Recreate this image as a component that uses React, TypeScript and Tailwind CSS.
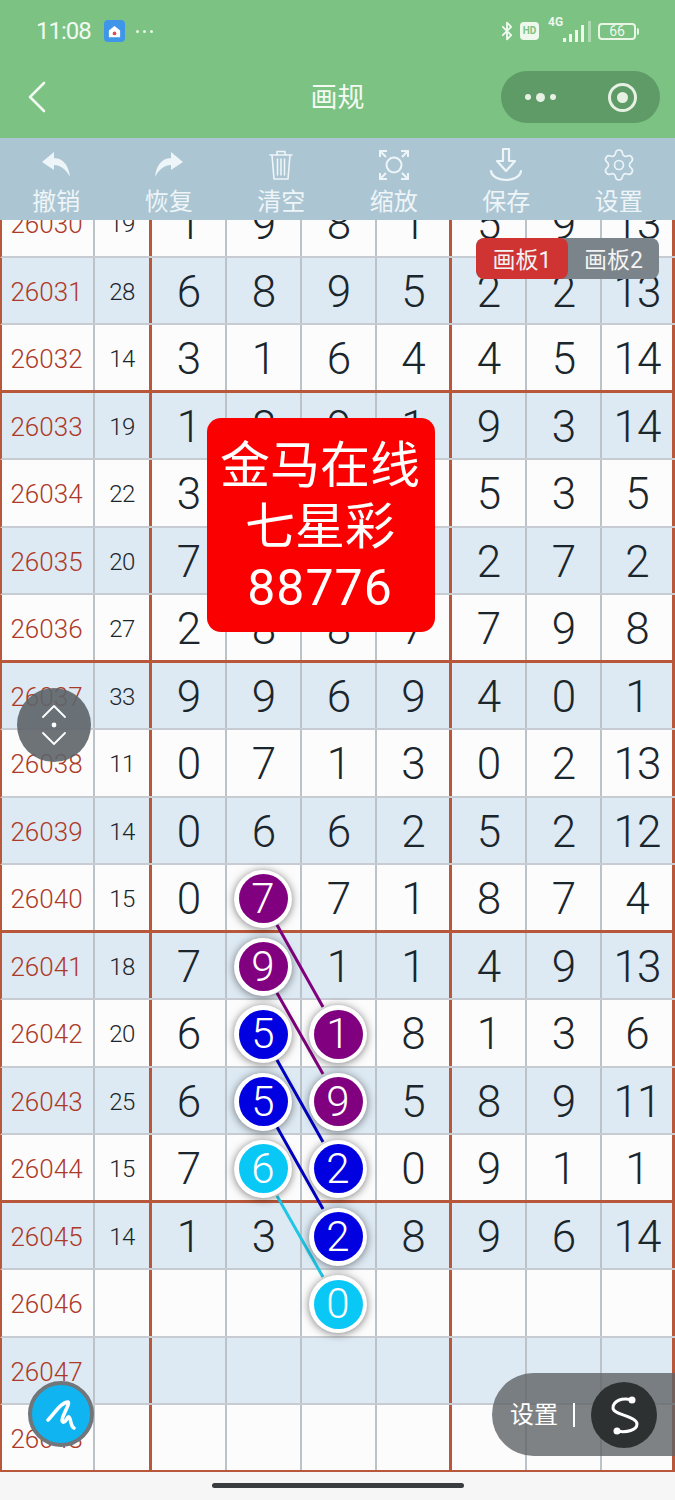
import React from "react";
import { Bluetooth, Settings } from "lucide-react";

type Ball = { v: string; c: string };
const P = "bg-[#800080]";
const B = "bg-[#0000e0]";
const C = "bg-[#0ac8f5]";

type Row = { id: string; sum: string; nums: (string | Ball)[] };
const row = (id: string, sum: string, ...nums: (string | Ball)[]): Row => ({ id, sum, nums });

const rows: Row[] = [
  row("26030", "19", "1", "9", "8", "1", "5", "9", "13"),
  row("26031", "28", "6", "8", "9", "5", "2", "2", "13"),
  row("26032", "14", "3", "1", "6", "4", "4", "5", "14"),
  row("26033", "19", "1", "8", "9", "1", "9", "3", "14"),
  row("26034", "22", "3", "2", "8", "9", "5", "3", "5"),
  row("26035", "20", "7", "4", "1", "8", "2", "7", "2"),
  row("26036", "27", "2", "8", "8", "7", "7", "9", "8"),
  row("26037", "33", "9", "9", "6", "9", "4", "0", "1"),
  row("26038", "11", "0", "7", "1", "3", "0", "2", "13"),
  row("26039", "14", "0", "6", "6", "2", "5", "2", "12"),
  row("26040", "15", "0", { v: "7", c: P }, "7", "1", "8", "7", "4"),
  row("26041", "18", "7", { v: "9", c: P }, "1", "1", "4", "9", "13"),
  row("26042", "20", "6", { v: "5", c: B }, { v: "1", c: P }, "8", "1", "3", "6"),
  row("26043", "25", "6", { v: "5", c: B }, { v: "9", c: P }, "5", "8", "9", "11"),
  row("26044", "15", "7", { v: "6", c: C }, { v: "2", c: B }, "0", "9", "1", "1"),
  row("26045", "14", "1", "3", { v: "2", c: B }, "8", "9", "6", "14"),
  row("26046", "", "", "", { v: "0", c: C }, "", "", "", ""),
  row("26047", "", "", "", "", "", "", "", ""),
  row("26048", "", "", "", "", "", "", "", ""),
];

const tools = ["撤销", "恢复", "清空", "缩放", "保存", "设置"];

function ToolIcon({ i }: { i: number }) {
  const cls = "h-[36px] w-[36px] text-[#eef5f8]";
  if (i === 0)
    return (
      <svg viewBox="0 0 36 36" className={cls} fill="currentColor">
        <path d="M16 5 L4 15 L16 23 V18 C22 18 28 22 32 30 C31 20 26 11 16 11 Z" />
      </svg>
    );
  if (i === 1)
    return (
      <svg viewBox="0 0 36 36" className={cls} fill="currentColor">
        <path d="M20 5 L32 15 L20 23 V18 C14 18 8 22 4 30 C5 20 10 11 20 11 Z" />
      </svg>
    );
  if (i === 2)
    return (
      <svg viewBox="0 0 36 36" className={cls} fill="none" stroke="currentColor" strokeWidth="1.6" strokeLinecap="round" strokeLinejoin="round">
        <path d="M7 8 H29 M14 8 V4.5 H22 V8 M9 8 L11 32 H25 L27 8 M14.5 12 V28 M18 12 V28 M21.5 12 V28" />
      </svg>
    );
  if (i === 3)
    return (
      <svg viewBox="0 0 36 36" className={cls} fill="none" stroke="currentColor" strokeWidth="2">
        <circle cx="18" cy="18" r="7.5" />
        <path d="M4 10 V4 H11 M4 4 L10 10 M32 10 V4 H25 M32 4 L26 10 M4 26 V32 H11 M4 32 L10 26 M32 26 V32 H25 M32 32 L26 26" />
      </svg>
    );
  if (i === 4)
    return (
      <svg viewBox="0 0 36 36" className={cls} fill="none" stroke="currentColor" strokeWidth="2.2" strokeLinejoin="round" strokeLinecap="round">
        <path d="M15 2 H21 V14 H27 L18 24 L9 14 H15 Z" />
        <path d="M3 24 C5 36 31 36 33 24" />
      </svg>
    );
  return <Settings className={cls} strokeWidth={1.1} />;
}

function Cell({ v, heavy }: { v: string | Ball; heavy?: boolean }) {
  const right = heavy ? "border-r-[3px] border-r-[#b9573a]" : "border-r-2 border-r-[#bcc3c8]";
  return (
    <div className={`relative flex items-center justify-center pt-[3px] ${right}`}>
      {typeof v === "string" ? (
        <span className="text-[44px] leading-none font-light tracking-[-1px] text-[#1b262c]">{v}</span>
      ) : (
        <span className="relative z-20 -ml-[1px] flex h-[58px] w-[58px] shrink-0 items-center justify-center rounded-full bg-white shadow-[0_1px_8px_rgba(0,0,0,0.5)]">
          <span className={`flex h-[49px] w-[49px] items-center justify-center rounded-full text-[42px] leading-none font-light text-white ${v.c}`}>
            {v.v}
          </span>
        </span>
      )}
    </div>
  );
}

export default function App() {
  return (
    <div className="relative h-[1500px] w-[675px] overflow-hidden bg-[#f6f6f6] font-['Roboto','Noto_Sans_CJK_SC',sans-serif]">
      <header className="h-[138px] bg-[#7bc283] text-white">
        <div className="flex h-[62px] items-center justify-between pr-[36px] pl-[36px]">
          <div className="flex items-center">
            <span className="text-[24px] leading-none tracking-[-1px] text-[#f1faf0]">11:08</span>
            <span className="ml-[13px] flex h-[22px] w-[21px] items-center justify-center rounded-[4px] bg-[#3f96e8]">
              <svg viewBox="0 0 16 16" className="h-[15px] w-[15px]" fill="white">
                <path d="M8 2 L14 7 V14 H2 V7 Z" />
                <circle cx="8" cy="10" r="2" fill="#d9534f" />
              </svg>
            </span>
            <span className="ml-[11px] flex gap-[4px]">
              <i className="block h-[3px] w-[3px] rounded-full bg-[#e6f5e6]" />
              <i className="block h-[3px] w-[3px] rounded-full bg-[#e6f5e6]" />
              <i className="block h-[3px] w-[3px] rounded-full bg-[#e6f5e6]" />
            </span>
          </div>
          <div className="flex items-center">
            <Bluetooth className="h-[30px] w-[20px] text-[#f1faf0]" strokeWidth={2.2} />
            <span className="ml-[3px] flex h-[18px] w-[19px] items-center justify-center rounded-[4px] bg-[#eef8ec] text-[10px] leading-none font-bold text-[#7bc283]">
              HD
            </span>
            <span className="ml-[9px] flex w-[16px] items-start self-start text-[12px] leading-none font-bold text-[#eef8ec]">4G</span>
            <svg viewBox="0 0 32 22" className="-ml-[3px] h-[22px] w-[32px]" fill="#eef8ec">
              <rect x="2" y="18" width="3" height="4" />
              <rect x="8" y="14" width="3" height="8" />
              <rect x="14" y="10" width="3" height="12" />
              <rect x="20" y="5" width="3" height="17" />
              <rect x="27" y="1" width="3" height="21" opacity="0.45" />
            </svg>
            <span className="ml-[5px] flex h-[17px] w-[38px] items-center justify-center rounded-[4px] border-2 border-[#e8f6e6] text-[14px] leading-none text-[#eef8ec]">
              66
            </span>
            <span className="ml-[1px] h-[7px] w-[2px] rounded-r-sm bg-[#e8f6e6]" />
          </div>
        </div>
        <div className="grid h-[70px] grid-cols-[1fr_auto_1fr] items-center">
          <div className="pl-[27px]">
            <svg viewBox="0 0 20 32" className="h-[32px] w-[20px]" fill="none" stroke="#f1faf0" strokeWidth="2.6" strokeLinecap="round" strokeLinejoin="round">
              <path d="M17 2 L3 16 L17 30" />
            </svg>
          </div>
          <h1 className="pt-[2px] text-[27px] leading-none font-normal text-[#f3faf2]">画规</h1>
          <div className="flex justify-end pr-[15px]">
            <div className="flex h-[52px] w-[159px] items-center justify-between rounded-full bg-[#5f9b66] pr-[23px] pl-[24px]">
              <span className="flex items-center gap-[5px]">
                <i className="block h-[6px] w-[6px] rounded-full bg-[#e6f1e4]" />
                <i className="block h-[9px] w-[9px] rounded-full bg-[#e6f1e4]" />
                <i className="block h-[6px] w-[6px] rounded-full bg-[#e6f1e4]" />
              </span>
              <span className="flex h-[29px] w-[29px] items-center justify-center rounded-full border-[3px] border-[#e6f1e4]">
                <i className="block h-[11px] w-[11px] rounded-full bg-[#e6f1e4]" />
              </span>
            </div>
          </div>
        </div>
      </header>

      <nav className="grid h-[82px] grid-cols-6 bg-[#abc5d3]">
        {tools.map((t, i) => (
          <div key={t} className="flex flex-col items-center pt-[9px]">
            <ToolIcon i={i} />
            <span className="mt-[4px] text-[24px] leading-[30px] text-[#eef5f8]">{t}</span>
          </div>
        ))}
      </nav>

      <main className="relative h-[1252px] overflow-hidden">
        <div className="-mt-[30px]">
          {rows.map((r, i) => {
            const odd = i % 2 === 1;
            const heavyBottom = (i + 2) % 4 === 0 ? true : i === 18;
            return (
              <div
                key={r.id}
                className={`grid h-[67.5px] grid-cols-[93px_57px_75px_75px_75px_75px_75px_75px_73px] border-l-[2px] border-l-[#b9573a] ${
                  odd ? "bg-[#dde9f3]" : "bg-[#fcfcfc]"
                } ${heavyBottom ? "border-b-[3px] border-b-[#b9573a]" : "border-b-2 border-b-[#c6ccd1]"}`}
              >
                <div className="flex items-center justify-center border-r-2 border-r-[#bcc3c8] pt-[3px] pr-[2px] text-[26px] leading-none font-light text-[#ad3a28]">
                  {r.id}
                </div>
                <div className="flex items-center justify-center border-r-[3px] border-r-[#b9573a] pt-[3px] text-[24px] leading-none font-light tracking-[-0.5px] text-[#1b262c]">
                  {r.sum}
                </div>
                {r.nums.map((n, j) => (
                  <Cell key={j} v={n} heavy={j === 3 || j === 6} />
                ))}
              </div>
            );
          })}
        </div>

        <svg className="pointer-events-none absolute top-0 left-0 z-10 h-[1252px] w-[675px]" viewBox="0 0 675 1252" fill="none" strokeWidth="3">
          <path d="M277 705 L323 787" stroke="#800080" />
          <path d="M277 773 L323 854" stroke="#800080" />
          <path d="M277 840 L323 922" stroke="#0000c8" />
          <path d="M277 907 L323 989" stroke="#0000c8" />
          <path d="M277 976 L323 1057" stroke="#1fc6e6" />
        </svg>
      </main>

      {/* board tabs */}
      <div className="absolute top-[238px] left-[476px] z-30 flex h-[41px] w-[183px] overflow-hidden rounded-[8px] bg-[#7b848a] text-[23px] leading-none text-[#f3f3f3]">
        <span className="flex w-[92px] items-center justify-center rounded-[8px] bg-[#cf3433] pt-[4px]">画板1</span>
        <span className="flex flex-1 items-center justify-center pt-[4px]">画板2</span>
      </div>

      {/* watermark card */}
      <div className="absolute top-[418px] left-[207px] z-30 flex h-[214px] w-[228px] flex-col items-center justify-center rounded-[14px] bg-[#fb0000] pt-[4px] pr-[2px] text-[50px] leading-[61px] text-white">
        <span>金马在线</span>
        <span>七星彩</span>
        <span className="tracking-[1px]">88776</span>
      </div>

      {/* scroll handle */}
      <div className="absolute top-[688px] left-[17px] z-30 flex h-[74px] w-[74px] items-center justify-center rounded-full bg-[#5d6468]/90">
        <svg viewBox="0 0 40 60" className="h-[60px] w-[40px]" fill="none" stroke="white" strokeWidth="1.8" strokeLinecap="round" strokeLinejoin="round">
          <path d="M9 22 L20 11 L31 22" />
          <path d="M9 38 L20 49 L31 38" />
          <circle cx="20" cy="30" r="2.4" fill="white" stroke="none" />
        </svg>
      </div>

      {/* pen button */}
      <div className="absolute top-[1381px] left-[28px] z-30 flex h-[66px] w-[66px] items-center justify-center rounded-full border-[4px] border-[#70767a] bg-[#10b4f0]">
        <svg viewBox="-20 -20 40 40" className="h-[40px] w-[40px]" fill="none" stroke="white" strokeWidth="3.6" strokeLinecap="round" strokeLinejoin="round">
          <path d="M-13 6 C-7 0 0 -12 7 -12 C10 -11 -2 6 2 8 C5 9 6 2 8 3 C10 4 9 12 13 14" />
        </svg>
      </div>

      {/* settings pill */}
      <div className="absolute top-[1373px] left-[492px] z-30 flex h-[83px] w-[183px] items-center rounded-l-[42px] bg-[#5f6365]/80 pl-[18px]">
        <span className="text-[24px] leading-none text-white">设置</span>
        <i className="ml-[15px] block h-[24px] w-[2px] bg-white" />
        <span className="ml-[16px] flex h-[66px] w-[66px] items-center justify-center rounded-full bg-[#2e3132]">
          <svg viewBox="-33 -33 66 66" className="h-[66px] w-[66px]" fill="none" stroke="white" strokeWidth="3" strokeLinecap="round">
            <path d="M8 -15 C-2 -18 -11 -14 -11 -7 C-11 0 13 1 13 9 C13 15 3 18 -7 16" />
            <circle cx="8" cy="-15" r="3.5" fill="white" stroke="none" />
            <circle cx="-7" cy="16" r="3.5" fill="white" stroke="none" />
          </svg>
        </span>
      </div>

      {/* home indicator */}
      <div className="absolute top-[1483px] left-[212px] h-[5px] w-[252px] rounded-full bg-[#3a3d3f]" />
    </div>
  );
}
